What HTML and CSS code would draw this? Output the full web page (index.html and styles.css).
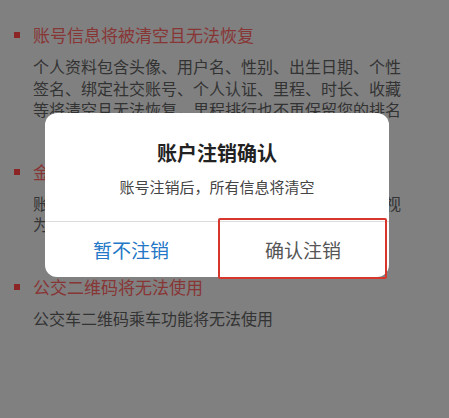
FILE: index.html
```html
<!DOCTYPE html>
<html lang="zh-CN">
<head>
<meta charset="utf-8">
<title>账户注销确认</title>
<link rel="stylesheet" href="styles.css">
</head>
<body>
<div class="page">
  <section class="item">
    <h2 class="item-title"><span class="dot"></span>账号信息将被清空且无法恢复</h2>
    <p class="item-text">个人资料包含头像、用户名、性别、出生日期、个性签名、绑定社交账号、个人认证、里程、时长、收藏等将清空且无法恢复，里程排行也不再保留您的排名</p>
  </section>
  <section class="item">
    <h2 class="item-title"><span class="dot"></span>金币、优惠券等虚拟权益将被清空</h2>
    <p class="item-text">账户中的金币、优惠券、会员权益等均将被清空，视为自动放弃</p>
  </section>
  <section class="item">
    <h2 class="item-title"><span class="dot"></span>公交二维码将无法使用</h2>
    <p class="item-text">公交车二维码乘车功能将无法使用</p>
  </section>
</div>

<div class="dialog">
  <div class="dialog-body">
    <div class="dialog-title">账户注销确认</div>
    <div class="dialog-msg">账号注销后，所有信息将清空</div>
  </div>
  <div class="dialog-actions">
    <div class="btn btn-cancel">暂不注销</div>
    <div class="btn btn-confirm">确认注销</div>
  </div>
  <div class="highlight"></div>
</div>
</body>
</html>
```
FILE: styles.css
```css
html, body {
  margin: 0;
  padding: 0;
}
body {
  background: #808080;
  font-family: "Noto Sans CJK SC", "Noto Sans", sans-serif;
  width: 449px;
  height: 418px;
  overflow: hidden;
  position: relative;
}
.page {
  padding: 23px 0 0 33px;
  width: 373px;
}
.item {
  margin-bottom: 39px;
}
.item-title {
  position: relative;
  margin: 0;
  font-size: 17px;
  line-height: 24px;
  font-weight: normal;
  color: #883535;
}
.dot {
  position: absolute;
  left: -19px;
  top: 9px;
  width: 6px;
  height: 6px;
  background: #8c2626;
}
.item-text {
  margin: 9px 0 0 0;
  font-size: 16px;
  line-height: 21.5px;
  color: #333333;
}
.dialog {
  position: absolute;
  left: 45px;
  top: 113px;
  width: 344px;
  background: #ffffff;
  border-radius: 12px;
}
.dialog-body {
  padding: 26px 0 23px;
  text-align: center;
  border-bottom: 1px solid #dcdcdc;
}
.dialog-title {
  font-size: 20px;
  line-height: 28px;
  font-weight: bold;
  color: #222222;
}
.dialog-msg {
  margin-top: 9px;
  font-size: 15px;
  line-height: 22px;
  color: #444444;
}
.dialog-actions {
  display: grid;
  grid-template-columns: 1fr 1fr;
  height: 55px;
}
.btn {
  display: flex;
  align-items: center;
  justify-content: center;
  font-size: 19px;
}
.btn-cancel {
  color: #2277c6;
}
.btn-confirm {
  color: #555555;
}
.highlight {
  position: absolute;
  left: 173px;
  top: 105px;
  width: 165px;
  height: 57px;
  border: 2px solid #d6362c;
  border-radius: 2px;
}
```
